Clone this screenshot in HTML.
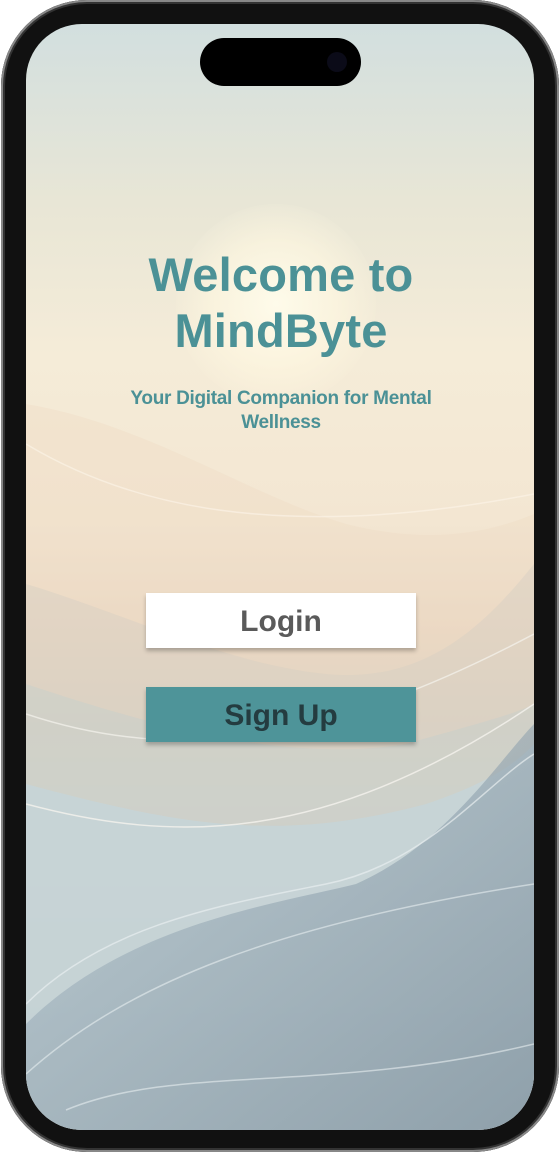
<!DOCTYPE html>
<html><head><style>
html,body{margin:0;padding:0;width:560px;height:1154px;background:#fff;overflow:hidden}
.phone{position:absolute;left:1px;top:0;width:558px;height:1152px;border-radius:86px;background:#111;box-shadow:inset 0 0 0 2px #888,inset 0 0 0 4px #333}
.screen{position:absolute;left:26px;top:24px;width:508px;height:1106px;border-radius:56px;overflow:hidden;
background:linear-gradient(180deg,#d2dfdf 0%,#e8e6d6 16%,#f5ecd8 30%,#f3e6d2 45%,#ead8c4 55%,#d6d0c4 63%,#c6d2d6 70%,#b0c1ca 80%,#8fa2b0 92%,#8a9eaa 100%)}
.sun{position:absolute;left:150px;top:180px;width:200px;height:200px;border-radius:50%;background:radial-gradient(circle,rgba(255,252,235,.95) 0%,rgba(255,248,225,.6) 45%,rgba(255,245,220,0) 75%)}
.island{position:absolute;left:200px;top:38px;width:161px;height:48px;border-radius:24px;background:#000}
.cam{position:absolute;left:327px;top:52px;width:20px;height:20px;border-radius:50%;background:#0b0b18}
h1{position:absolute;left:0;width:562px;top:247px;margin:0;text-align:center;font:bold 47px/56px "Liberation Sans",sans-serif;color:#4b9196;letter-spacing:0.2px}
.sub{position:absolute;left:100px;width:362px;top:387px;text-align:center;font:bold 19px/24px "Liberation Sans",sans-serif;color:#4b9196;letter-spacing:-0.3px}
.btn{position:absolute;left:146px;width:270px;height:55px;text-align:center;font:bold 30px/57px "Liberation Sans",sans-serif;box-shadow:0 3px 4px rgba(0,0,0,.25)}
.login{top:593px;background:#fff;color:#5a5a5a}
.sign{top:687px;background:#4e9499;color:#243c40}
</style></head><body>
<div class="phone"></div>
<div class="screen">
<svg width="508" height="1106" style="position:absolute;left:0;top:0">
<defs><linearGradient id="dk" x1="0" y1="0" x2="1" y2="1"><stop offset="0" stop-color="#b6c7d0"/><stop offset="1" stop-color="#6b7f8f"/></linearGradient></defs>
<path d="M0 380 C120 400 220 470 320 500 C400 520 460 510 508 490 L508 1106 L0 1106Z" fill="#efd9c2" opacity=".35"/>
<path d="M0 560 C100 590 200 640 300 650 C400 660 460 600 508 540 L508 1106 L0 1106Z" fill="#d8d0c4" opacity=".5"/>
<path d="M0 660 C120 700 260 740 380 720 C450 700 490 690 508 680 L508 1106 L0 1106Z" fill="#c9cfcb" opacity=".55"/>
<path d="M0 760 C150 800 250 820 400 780 C460 760 490 740 508 720 L508 1106 L0 1106Z" fill="#c5d5dc" opacity=".7"/>
<path d="M0 1000 C100 900 250 880 330 860 C420 820 470 740 508 700 L508 1106 L0 1106Z" fill="url(#dk)" opacity=".6"/>
<path d="M0 1050 C100 960 250 900 508 860" stroke="#e8eef0" stroke-width="1.5" fill="none" opacity=".6"/>
<path d="M0 980 C80 900 200 880 300 860 C400 840 460 760 508 730" stroke="#e8eef0" stroke-width="1.5" fill="none" opacity=".7"/>
<path d="M0 780 C150 820 300 820 508 680" stroke="#f5f3ee" stroke-width="1.5" fill="none" opacity=".8"/>
<path d="M0 690 C150 740 300 720 508 610" stroke="#f5f3ee" stroke-width="1.5" fill="none" opacity=".7"/>
<path d="M0 420 C100 480 250 520 508 470" stroke="#fbf2e6" stroke-width="1.5" fill="none" opacity=".7"/>
<path d="M40 1086 C150 1040 300 1070 508 1020" stroke="#e8eef0" stroke-width="1.5" fill="none" opacity=".6"/>
</svg>
<div class="sun"></div>
</div>
<div class="island"></div><div class="cam"></div>
<h1>Welcome to<br>MindByte</h1>
<div class="sub">Your Digital Companion for Mental Wellness</div>
<div class="btn login">Login</div>
<div class="btn sign">Sign Up</div>
</body></html>
